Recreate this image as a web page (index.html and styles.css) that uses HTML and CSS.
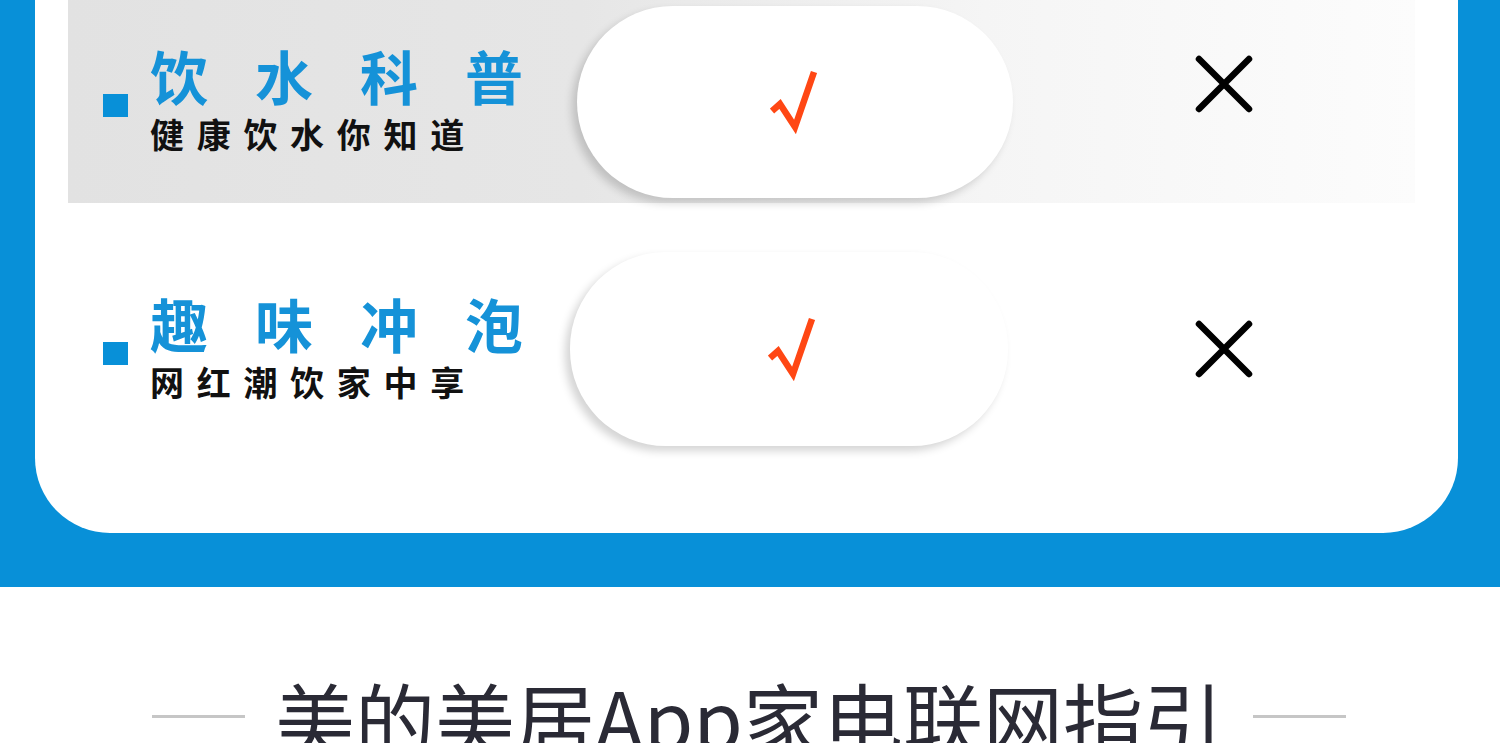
FILE: index.html
```html
<!DOCTYPE html>
<html lang="zh-CN">
<head>
  <meta charset="UTF-8">
  <meta name="viewport" content="width=device-width, initial-scale=1.0">
  <title>美的美居App家电联网指引</title>
  <link rel="stylesheet" href="styles.css">
</head>
<body>
  <div class="frame">
    <div class="card">
      <div class="row row-grey">
        <div class="label">
          <span class="dot"></span>
          <div class="label-text">
            <div class="title">饮水科普</div>
            <div class="sub">健康饮水你知道</div>
          </div>
        </div>
        <div class="pill">
          <svg class="check" width="50" height="66" viewBox="0 0 50 66">
            <polyline points="2,42 10,35 25,58 44,3" fill="none" stroke="#ff4714" stroke-width="6.5" stroke-linejoin="miter"/>
          </svg>
        </div>
        <div class="cross cross-up">
          <svg width="60" height="60" viewBox="0 0 60 60">
            <path d="M5 5 L55 55 M55 5 L5 55" stroke="#000" stroke-width="6.5" stroke-linecap="round"/>
          </svg>
        </div>
      </div>

      <div class="row row-b">
        <div class="label">
          <span class="dot"></span>
          <div class="label-text">
            <div class="title">趣味冲泡</div>
            <div class="sub">网红潮饮家中享</div>
          </div>
        </div>
        <div class="pill">
          <svg class="check" width="50" height="66" viewBox="0 0 50 66">
            <polyline points="2,42 10,35 25,58 44,3" fill="none" stroke="#ff4714" stroke-width="6.5" stroke-linejoin="miter"/>
          </svg>
        </div>
        <div class="cross">
          <svg width="60" height="60" viewBox="0 0 60 60">
            <path d="M5 5 L55 55 M55 5 L5 55" stroke="#000" stroke-width="6.5" stroke-linecap="round"/>
          </svg>
        </div>
      </div>
    </div>
  </div>

  <div class="guide">
    <span class="rule"></span>
    <h2 class="guide-title">美的美居App家电联网指引</h2>
    <span class="rule"></span>
  </div>
</body>
</html>
```

FILE: styles.css
```css
body {
  margin: 0;
  background: #fff;
  font-family: "Noto Sans CJK SC", "Noto Sans", sans-serif;
  overflow: hidden;
}
.frame {
  background: #0890d8;
  padding: 0 42px 54px 35px;
}
.card {
  background: #fff;
  height: 533px;
  border-radius: 0 0 75px 75px;
  padding: 0 43px 0 33px;
  box-sizing: border-box;
}
.row {
  display: flex;
  align-items: center;
  height: 203px;
}
.row-grey {
  background: linear-gradient(to right, #e2e2e2 0%, #e6e6e6 38%, #f5f5f5 68%, #fcfcfc 100%);
}
.row-b {
  height: 292px;
}
.label {
  width: 509px;
  box-sizing: border-box;
  padding-left: 35px;
  display: flex;
  align-items: flex-start;
}
.row-b .label {
  width: 502px;
}
.dot {
  width: 25px;
  height: 23px;
  background: #0890d8;
  margin-top: 42px;
  margin-right: 22px;
  flex-shrink: 0;
}
.label-text {
  margin-top: -6px;
}
.title {
  font-size: 58px;
  line-height: 1;
  font-weight: 700;
  color: #1592d8;
  letter-spacing: 47px;
  white-space: nowrap;
}
.sub {
  font-size: 34px;
  line-height: 1;
  font-weight: 700;
  color: #111;
  letter-spacing: 12.7px;
  margin-top: 13px;
  white-space: nowrap;
}
.pill {
  width: 436px;
  height: 192px;
  border-radius: 96px;
  background: #fff;
  box-shadow: -5px 5px 9px rgba(0, 0, 0, 0.17);
  display: flex;
  align-items: center;
  justify-content: center;
  flex-shrink: 0;
}
.row-b .pill {
  width: 438px;
  height: 194px;
}
.row-b .check {
  margin-left: 8px;
}
.cross {
  margin-left: 181px;
  display: flex;
}
.row-b .cross {
  margin-left: 186px;
}
.cross-up {
  margin-bottom: 36px;
}
.guide {
  display: flex;
  align-items: center;
  justify-content: center;
  gap: 30px;
  padding-top: 89px;
  margin-left: -2px;
}
.rule {
  width: 93px;
  height: 3px;
  background: #c6c6c6;
}
.guide-title {
  margin: 0;
  font-size: 80px;
  line-height: 1;
  font-weight: 400;
  color: #2a2a35;
  white-space: nowrap;
}
```
